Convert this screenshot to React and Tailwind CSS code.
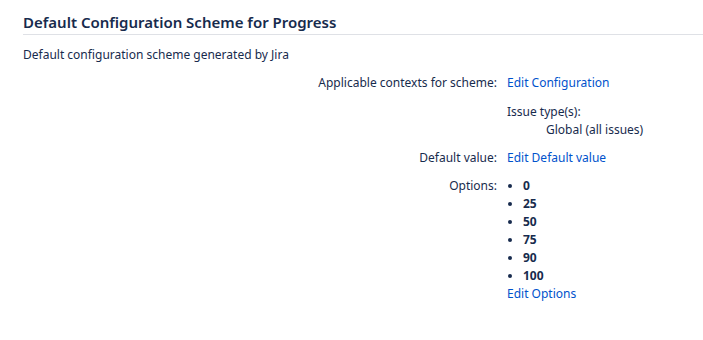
import React from "react";

const options = ["0", "25", "50", "75", "90", "100"];

function Row({ label, children, className = "" }) {
  return (
    <div className={`flex ${className}`}>
      <div className="w-[507px] shrink-0 text-right pr-[10px]">{label}</div>
      <div>{children}</div>
    </div>
  );
}

export default function App() {
  return (
    <div
      className="w-[703px] h-[340px] bg-white text-[#172b4d] text-[12px] leading-[18px] pl-[23px]"
      style={{ fontFamily: '"Noto Sans", "Open Sans", sans-serif' }}
    >
      {/* Heading */}
      <div className="pt-[13px] border-b border-[#dfe1e6] pb-[3px]">
        <h2 className="text-[15px] font-semibold leading-[18px]">Default Configuration Scheme for Progress</h2>
      </div>
      <p className="mt-[11px]">Default configuration scheme generated by Jira</p>

      <div className="-ml-[23px] mt-[10px]">
        <Row label="Applicable contexts for scheme:">
          <a className="text-[#0052cc]">Edit Configuration</a>
        </Row>

        <Row label="" className="mt-[11px]">
          <div>Issue type(s):</div>
          <div className="pl-[39px]">Global (all issues)</div>
        </Row>

        <Row label="Default value:" className="mt-[10px]">
          <a className="text-[#0052cc]">Edit Default value</a>
        </Row>

        <Row label="Options:" className="mt-[10px]">
          <ul className="list-disc pl-[16px]">
            {options.map((o) => (
              <li key={o} className="font-bold">{o}</li>
            ))}
          </ul>
          <a className="text-[#0052cc]">Edit Options</a>
        </Row>
      </div>
    </div>
  );
}
